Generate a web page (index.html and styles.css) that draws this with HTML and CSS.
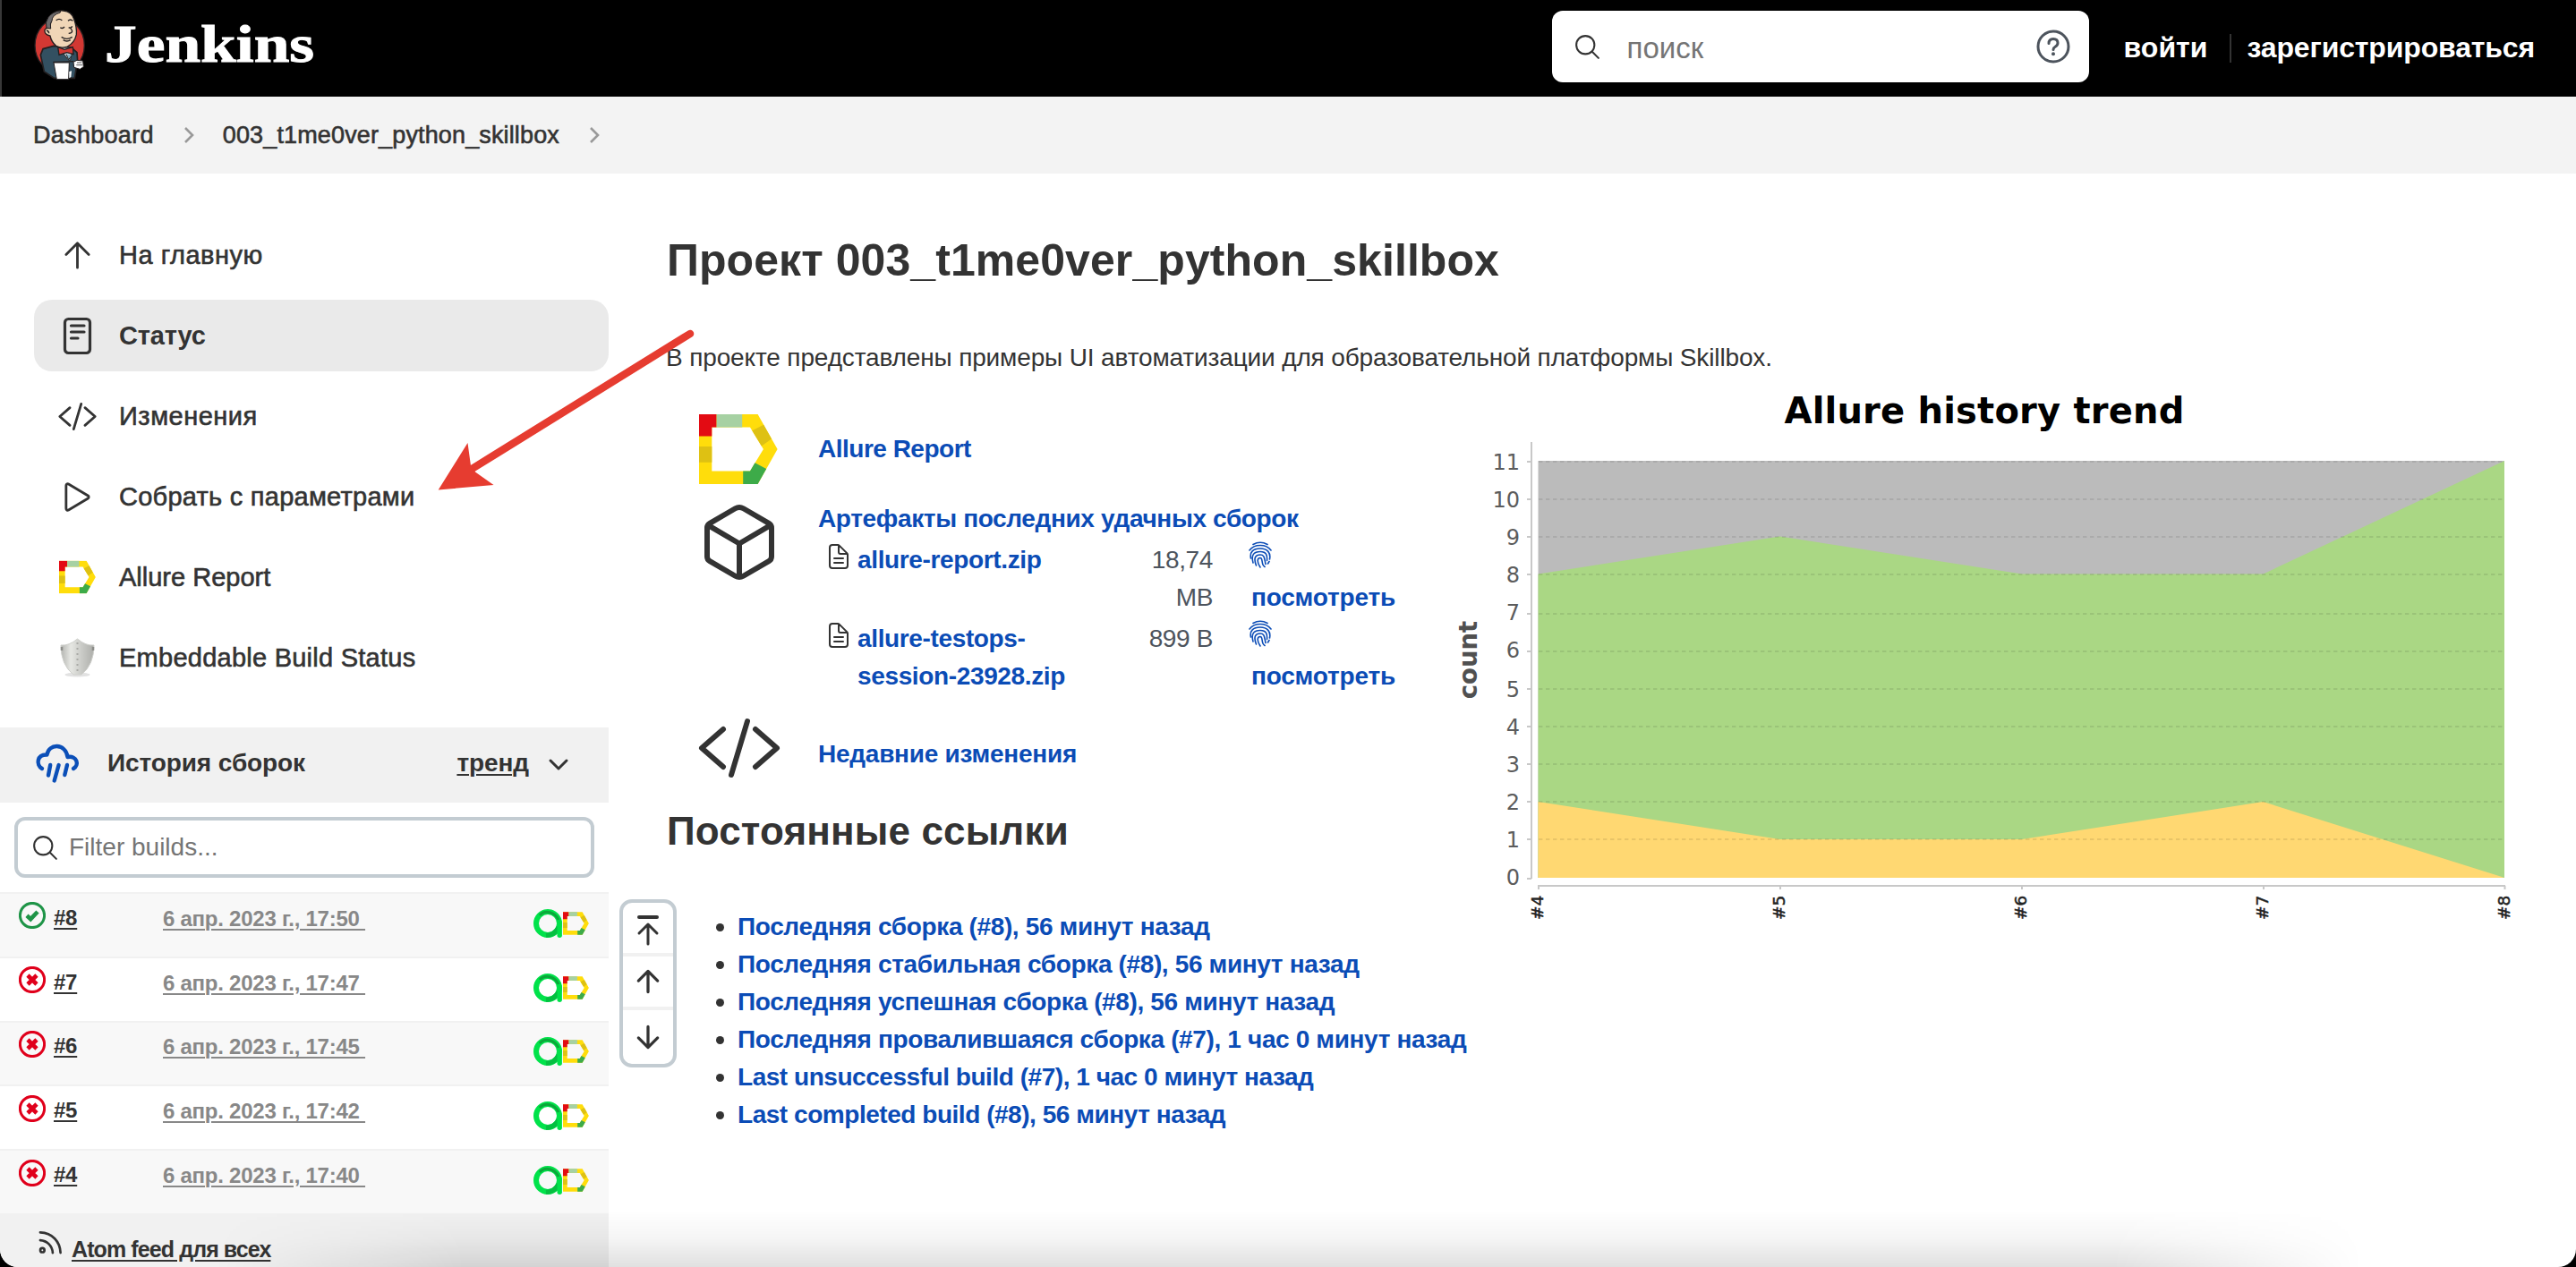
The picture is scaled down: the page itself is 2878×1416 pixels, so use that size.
FILE: index.html
```
<!DOCTYPE html>
<html lang="ru">
<head>
<meta charset="utf-8">
<title>003_t1me0ver_python_skillbox [Jenkins]</title>
<link rel="stylesheet" href="styles.css">
</head>
<body>
<svg class="sprite" aria-hidden="true">
  <symbol id="allure" viewBox="0 0 88 78">
    <path fill="#ffdd0b" d="M0 0H65.600L87.600 39 65.600 78H0zM14.300 14.500V63.400H57L71.900 39 57 14.500z" fill-rule="evenodd"/>
    <path fill="#e30b13" d="M0 0H19.600V14.500H14.300V24.400H0z"/>
    <path fill="#a6d1a3" d="M19.600 0H48.200V14.500H19.600z"/>
    <path fill="#dec113" d="M0 36H14.300V53.800H0zM72.200 11.700L81 27.500 69.800 35.500 59.300 18.300z"/>
    <path fill="#3dab49" d="M62.400 54.300L75.200 61 65.600 78H49.200V63.400H57z"/>
  </symbol>
  <symbol id="testops" viewBox="0 0 32 32">
    <circle cx="16" cy="16" r="13" fill="none" stroke="#00e24a" stroke-width="6"/>
    <path d="M7 7C13 .5 24 3 28 12" fill="none" stroke="#0aa83a" stroke-width="3"/>
    <path d="M14 29.500C21 29 26 25 28 20" fill="none" stroke="#05bf41" stroke-width="5"/>
    <path d="M29.200 15V29.300" fill="none" stroke="#00e24a" stroke-width="5.400" stroke-linecap="round"/>
  </symbol>
  <symbol id="up" viewBox="0 0 512 512"><path d="M112 244l144-144 144 144M256 120v292"/></symbol>
  <symbol id="down" viewBox="0 0 512 512"><path d="M112 268l144 144 144-144M256 392V100"/></symbol>
  <symbol id="code" viewBox="0 0 512 512"><path d="M160 368L32 256l128-112M352 368l128-112-128-112M304 96l-96 320"/></symbol>
  <symbol id="search" viewBox="0 0 512 512"><path d="M221.090 64a157.090 157.090 0 10157.090 157.090A157.100 157.100 0 00221.090 64zM338.290 338.290L448 448"/></symbol>
  <symbol id="doc" viewBox="0 0 512 512"><path d="M416 221.250V416a48 48 0 01-48 48H144a48 48 0 01-48-48V96a48 48 0 0148-48h98.750a32 32 0 0122.620 9.370l141.260 141.260a32 32 0 019.370 22.620zM256 56v120a32 32 0 0032 32h120M176 288h160M176 368h160"/></symbol>
  <symbol id="finger" viewBox="0 0 26 30"><path d="M5 3.500Q13-1 21 3.500M1 10Q5 4.500 13 4.500T25 10M2.500 19C1 12 5 8 13 8S25 13 23.500 20M5 24C2.500 15 6 11.500 13 11.500S21 16 20.500 21.500M8.500 27C5 18 8 15 13 15S17.500 19 19 25.500M13 29C9 23 9.500 18.500 13 18.500S13.500 26 18 28.500M21.500 25L23 22.500"/></symbol>
  <symbol id="fail" viewBox="0 0 30 30"><circle cx="15" cy="15" r="13.600"/><path class="mark" d="M10 10L20 20M20 10L10 20"/></symbol>
  <symbol id="ok" viewBox="0 0 30 30"><circle cx="15" cy="15" r="13.600"/><path class="mark" d="M9 15.300L13.200 19.200 21 11"/></symbol>
</svg>

<div class="page">
  <header class="header">
    <svg class="butler" viewBox="0 0 270 288">
      <ellipse cx="110" cy="140" rx="83" ry="92" fill="#d33833" stroke="#231f20" stroke-width="4"/>
      <path d="M54 152L90 142 150 148 168 164 170 190 160 250 92 250 58 228 46 172z" fill="#335061" stroke="#231f20" stroke-width="5"/>
      <path d="M106 146L152 148 146 190 138 188z" fill="#c9d6de" stroke="#231f20" stroke-width="3"/>
      <path d="M82 40Q94 22 122 24 150 26 158 52 168 80 166 104 160 132 136 144 116 152 98 142 82 128 78 108 58 104 60 88 66 78 78 82z" fill="#f0d6b7" stroke="#231f20" stroke-width="4"/>
      <path d="M112 24Q84 28 72 46 60 62 66 82L80 84Q76 66 84 58 84 38 112 30z" fill="#6d6b6d" stroke="#231f20" stroke-width="3"/>
      <path d="M98 56Q108 48 118 56M138 58Q146 50 154 58M112 80Q120 86 126 78M140 80Q148 84 152 76M146 82Q160 98 140 100M116 112Q134 124 152 112M122 122Q134 130 146 122M66 90Q74 92 74 100" fill="none" stroke="#231f20" stroke-width="4"/>
      <path d="M104 146L126 154 154 146 156 170 134 164 108 172z" fill="#d33833" stroke="#231f20" stroke-width="4"/>
      <path d="M132 170L140 188 152 172" fill="#81b0c4" stroke="#231f20" stroke-width="3"/>
      <path d="M90 198L142 198 140 254 100 254z" fill="#fff" stroke="#231f20" stroke-width="3"/>
      <path d="M142 228L150 226 148 246 142 250z" fill="#fff"/>
      <path d="M156 196L168 190 188 192 190 212 178 220 158 214z" fill="#fff" stroke="#231f20" stroke-width="3"/>
      <path d="M168 198H184M166 206H186" stroke="#555" stroke-width="3"/>
      <path d="M88 196L156 194" stroke="#231f20" stroke-width="4"/>
    </svg>
    <span class="brand">Jenkins</span>
    <div class="search">
      <svg class="line i33"><use href="#search"/></svg>
      <span class="search-hint">поиск</span>
      <svg class="help" viewBox="0 0 38 38"><circle cx="19" cy="19" r="17"/><path d="M14 15.500Q14 10.500 19 10.500T24 15Q24 17.500 21.500 19T19 22.500"/><circle class="dot" cx="19" cy="27.300" r="2"/></svg>
    </div>
    <nav class="login"><a class="signin">войти</a><a class="signup">зарегистрироваться</a></nav>
  </header>

  <div class="crumbs">
    <span>Dashboard</span>
    <svg class="sep" viewBox="0 0 12 20"><path d="M2 2L10 10 2 18"/></svg>
    <span class="job">003_t1me0ver_python_skillbox</span>
    <svg class="sep" viewBox="0 0 12 20"><path d="M2 2L10 10 2 18"/></svg>
  </div>

  <div class="body">
    <aside class="side">
      <nav class="tasks">
        <a class="task loose"><svg class="line i45"><use href="#up"/></svg>На главную</a>
        <a class="task active"><svg class="line i45" viewBox="0 0 45 45"><g stroke-width="3.200"><rect x="8.500" y="3.500" width="28" height="38" rx="4"/><path d="M15.500 11H30M15.500 18H30M15.500 25H23"/></g></svg>Статус</a>
        <a class="task loose"><svg class="line i45"><use href="#code"/></svg>Изменения</a>
        <a class="task"><svg class="line i45" viewBox="0 0 512 512"><path d="M112 111v290c0 17.440 17 28.520 31 20.160l247.900-148.370c12.120-7.250 12.120-26.330 0-33.580L143 90.840c-14-8.360-31 2.720-31 20.160z"/></svg>Собрать с параметрами</a>
        <a class="task tight"><svg class="i45" viewBox="0 0 45 45"><use href="#allure" x="2" y="3.500" width="41" height="37"/></svg>Allure Report</a>
        <a class="task"><svg class="i45" viewBox="0 0 45 45">
          <defs><linearGradient id="steel"><stop offset="0" stop-color="#b3b4b0"/><stop offset=".3" stop-color="#e6e7e3"/><stop offset=".55" stop-color="#d0d1cd"/><stop offset="1" stop-color="#adaeaa"/></linearGradient></defs>
          <ellipse cx="22.500" cy="41" rx="14" ry="2.500" fill="#e2e2e2"/>
          <path d="M22.500 1Q32 9 41 8 41 30 27 41H18Q4 30 4 8 13 9 22.500 1z" fill="url(#steel)" stroke="#cfd0cc"/>
          <path d="M22.500 5V37" stroke="#a9aaa6" stroke-width="2" stroke-dasharray="2 4"/>
          <path d="M5 10V14M40 10V14" stroke="#8c8d89" stroke-width="2.500"/></svg>Embeddable Build Status</a>
      </nav>

      <section class="history">
        <div class="history-head">
          <svg class="cloud" viewBox="0 0 48 44"><path d="M7 28C0 24 1 12 12.500 12.500 14 0 33 -1 35.500 15 46 13 49 24 42 28M16.200 24L14 35.500M25.600 24L20.700 41.500M35 24L32.300 35"/></svg>
          <b>История сборок</b>
          <a class="trend">тренд</a>
          <svg class="chev" viewBox="0 0 24 16"><path d="M3 3L12 12 21 3"/></svg>
        </div>
        <div class="filter"><svg class="line i33"><use href="#search"/></svg><span>Filter builds...</span></div>
        <div class="builds">
          <div class="build"><svg class="ball ok"><use href="#ok"/></svg><a class="num">#8</a><a class="date">6 апр. 2023 г., 17:50&nbsp;</a><span class="badges"><svg class="a"><use href="#testops"/></svg><svg class="d"><use href="#allure"/></svg></span></div>
          <div class="build"><svg class="ball"><use href="#fail"/></svg><a class="num">#7</a><a class="date">6 апр. 2023 г., 17:47&nbsp;</a><span class="badges"><svg class="a"><use href="#testops"/></svg><svg class="d"><use href="#allure"/></svg></span></div>
          <div class="build"><svg class="ball"><use href="#fail"/></svg><a class="num">#6</a><a class="date">6 апр. 2023 г., 17:45&nbsp;</a><span class="badges"><svg class="a"><use href="#testops"/></svg><svg class="d"><use href="#allure"/></svg></span></div>
          <div class="build"><svg class="ball"><use href="#fail"/></svg><a class="num">#5</a><a class="date">6 апр. 2023 г., 17:42&nbsp;</a><span class="badges"><svg class="a"><use href="#testops"/></svg><svg class="d"><use href="#allure"/></svg></span></div>
          <div class="build"><svg class="ball"><use href="#fail"/></svg><a class="num">#4</a><a class="date">6 апр. 2023 г., 17:40&nbsp;</a><span class="badges"><svg class="a"><use href="#testops"/></svg><svg class="d"><use href="#allure"/></svg></span></div>
        </div>
        <div class="feed">
          <svg class="rss" viewBox="0 0 28 28"><path d="M2 2.500C16 3 25 13 25.500 26M2 11.500C10 12 16 18 16.500 26"/><circle cx="4.500" cy="23" r="2.400"/></svg>
          <a>Atom feed для всех</a>
        </div>
      </section>
    </aside>

    <main class="main">
      <h1>Проект 003_t1me0ver_python_skillbox</h1>
      <p class="about">В проекте представлены примеры UI автоматизации для образовательной платформы Skillbox.</p>
      <div class="columns">
        <div class="info">
          <div class="entry report"><svg class="big-allure"><use href="#allure"/></svg><a class="wide">Allure Report</a></div>
          <div class="entry artifacts">
            <svg class="line i96 cube" viewBox="0 0 512 512"><path d="M448 341.370V170.610A32 32 0 00432.110 143l-152-88.460a47.940 47.940 0 00-48.240 0L79.890 143A32 32 0 0064 170.610v170.760A32 32 0 0079.890 369l152 88.460a48 48 0 0048.240 0l152-88.460A32 32 0 00448 341.370zM69 153.990l187 110 187-110M256 463.990v-200"/></svg>
            <div class="artifact-list">
              <a>Артефакты последних удачных сборок</a>
              <div class="files">
                <svg class="line doc"><use href="#doc"/></svg><a class="name">allure-report.zip</a><span class="size">18,74<br>MB</span><span class="view"><svg class="finger"><use href="#finger"/></svg><a>посмотреть</a></span>
                <svg class="line doc"><use href="#doc"/></svg><a class="name">allure-testops-<br>session-23928.zip</a><span class="size">899 B</span><span class="view"><svg class="finger"><use href="#finger"/></svg><a>посмотреть</a></span>
              </div>
            </div>
          </div>
          <div class="entry changes"><svg class="line i96"><use href="#code"/></svg><a>Недавние изменения</a></div>
          <h2>Постоянные ссылки</h2>
          <ul class="links">
            <li><a>Последняя сборка (#8), 56 минут назад</a></li>
            <li><a>Последняя стабильная сборка (#8), 56 минут назад</a></li>
            <li><a>Последняя успешная сборка (#8), 56 минут назад</a></li>
            <li><a>Последняя провалившаяся сборка (#7), 1 час 0 минут назад</a></li>
            <li><a class="latin">Last unsuccessful build (#7), 1 час 0 минут назад</a></li>
            <li><a class="latin">Last completed build (#8), 56 минут назад</a></li>
          </ul>
        </div>
        <svg class="chart" viewBox="1620 420 1258 620">
          <text class="chart-title" x="2217" y="472">Allure history trend</text>
          <path fill="#bbb" d="M1718.500 514H2798V980H1718.500z"/>
          <path fill="#aad784" d="M1718.500 640.500L1988.500 598.500 2259 640.500H2528.500L2798 514V980H1718.500z"/>
          <path fill="#ffd872" d="M1718.500 895L1988.500 937H2259L2528.500 895 2798 980H1718.500z"/>
          <path class="grid" d="M1719 515H2798M1719 557H2798M1719 599H2798M1719 641H2798M1719 685H2798M1719 727H2798M1719 769H2798M1719 811H2798M1719 853H2798M1719 895H2798M1719 937H2798"/>
          <path class="axis" d="M1711 493V981M1706 515H1711M1706 557H1711M1706 599H1711M1706 641H1711M1706 685H1711M1706 727H1711M1706 769H1711M1706 811H1711M1706 853H1711M1706 895H1711M1706 937H1711M1706 981H1711M1718 989H2799M1719 989V993M1989 989V993M2259 989V993M2529 989V993M2798.500 989V993"/>
          <g class="y-labels">
            <text x="1698" y="524">11</text><text x="1698" y="566">10</text><text x="1698" y="608">9</text><text x="1698" y="650">8</text><text x="1698" y="692">7</text><text x="1698" y="734">6</text><text x="1698" y="778">5</text><text x="1698" y="820">4</text><text x="1698" y="862">3</text><text x="1698" y="904">2</text><text x="1698" y="946">1</text><text x="1698" y="988">0</text>
          </g>
          <text class="y-title" transform="translate(1649.500 736.500) rotate(-90)">count</text>
          <g class="x-labels">
            <text transform="translate(1724 1027) rotate(-90)">#4</text><text transform="translate(1994 1027) rotate(-90)">#5</text><text transform="translate(2264 1027) rotate(-90)">#6</text><text transform="translate(2533.500 1027) rotate(-90)">#7</text><text transform="translate(2803.500 1027) rotate(-90)">#8</text>
          </g>
        </svg>
      </div>
    </main>
  </div>

  <div class="pager">
    <span><svg class="line i40" viewBox="0 0 40 40"><path stroke-width="4" d="M10 6H30"/><path stroke-width="3" d="M10 24L20 14 30 24M20 15V36"/></svg></span>
    <span><svg class="line i38"><use href="#up"/></svg></span>
    <span><svg class="line i38"><use href="#down"/></svg></span>
  </div>
  <svg class="pointer" viewBox="480 360 310 200"><path d="M771 373L524 526" fill="none" stroke="#e63c30" stroke-width="8.500" stroke-linecap="round"/><path d="M489.700 547.500L522.500 495 526 520.500 531 527.500 551.500 542z" fill="#e63c30"/></svg>
  <div class="shade"></div>
</div>
</body>
</html>
```
FILE: styles.css
```
* { box-sizing: border-box; }
body {
  margin: 0;
  background: #000;
  color: #333;
  font: 28px/42px "Liberation Sans", Arial, sans-serif;
}
svg { display: block; flex: none; overflow: visible; }
.sprite { position: absolute; width: 0; height: 0; }
.page {
  position: relative;
  display: flex;
  flex-direction: column;
  height: 1416px;
  overflow: hidden;
  background: #fff;
  border-radius: 0 0 20px 20px;
}

.line { fill: none; stroke: #333; stroke-width: 32; stroke-linecap: round; stroke-linejoin: round; }
.i33 { width: 33px; height: 33px; }
.i38 { width: 38px; height: 38px; stroke-width: 44; }
.i40 { width: 40px; height: 40px; }
.i45 { width: 45px; height: 45px; }
.i96 { width: 96px; height: 96px; }

/* top bar */
.header {
  flex: none;
  display: flex;
  align-items: center;
  height: 108px;
  padding: 0 46px 4px 28px;
  background: #000;
  border-left: 2px solid #383838;
  color: #fff;
  font-size: 32px;
}
.butler { width: 90px; height: 96px; }
.brand {
  width: 236px;
  margin: -6px 0 0 -3px;
  font: bold 60px/70px "Liberation Serif", "Times New Roman", serif;
  transform: scaleX(1.19);
  transform-origin: left;
  -webkit-text-stroke: 1px #fff;
}
.search {
  display: flex;
  align-items: center;
  width: 600px;
  height: 80px;
  margin-left: auto;
  padding: 0 21px 0 23px;
  background: #fff;
  border-radius: 12px;
  color: #757575;
  font-size: 33px;
}
.search-hint { margin: 4px auto 0 28px; }
.help { width: 38px; height: 38px; fill: none; stroke: #4d545d; stroke-width: 3; stroke-linecap: round; }
.help .dot { fill: #4d545d; stroke: none; }
.login { display: flex; align-items: center; padding-top: 1px; font-weight: bold; }
.signin { padding: 0 25px 0 39px; }
.signup { letter-spacing: -.15px; }
.signup::before {
  content: "";
  display: inline-block;
  width: 2px;
  height: 32px;
  margin: 0 17px -6px 0;
  background: #333;
}

/* breadcrumbs */
.crumbs {
  flex: none;
  display: flex;
  align-items: center;
  height: 86px;
  padding-left: 37px;
  background: #f3f3f3;
  font-size: 27px;
  letter-spacing: .3px;
  -webkit-text-stroke: .6px #333;
}
.job { letter-spacing: .14px; }
.sep { width: 12px; height: 20px; margin: 0 32px 0 33px; fill: none; stroke: #999; stroke-width: 2.6; }

.body { display: flex; }

/* side panel */
.side { flex: none; width: 680px; padding-top: 51px; }
.tasks { display: flex; flex-direction: column; gap: 10px; margin-left: 38px; }
.task {
  display: flex;
  align-items: center;
  gap: 24px;
  height: 80px;
  padding-left: 26px;
  border-radius: 20px;
  font-size: 29px;
  letter-spacing: .25px;
  -webkit-text-stroke: .6px #333;
}
.task.loose { letter-spacing: .5px; }
.task.tight { letter-spacing: 0; }
.task.active { background: #eaeaea; font-weight: bold; letter-spacing: -.15px; -webkit-text-stroke: 0; }

.history { margin-top: 38px; }
.history-head {
  display: flex;
  align-items: center;
  height: 84px;
  padding: 0 44px 4px 40px;
  background: #f1f1f1;
  letter-spacing: -.1px;
}
.cloud { width: 48px; height: 44px; margin-right: 32px; fill: none; stroke: #0b4fb8; stroke-width: 4.400; stroke-linecap: round; stroke-linejoin: round; }
.trend { margin-left: auto; font-weight: bold; text-decoration: underline; text-decoration-thickness: 2px; text-underline-offset: 3px; }
.chev { width: 24px; height: 16px; margin: 4px 0 0 21px; fill: none; stroke: #333; stroke-width: 3; stroke-linecap: round; stroke-linejoin: round; }
.filter {
  display: flex;
  align-items: center;
  gap: 10px;
  height: 68px;
  margin: 16px;
  padding-left: 14px;
  border: 4px solid #c3ccd2;
  border-radius: 12px;
  color: #757575;
}
.build {
  display: flex;
  align-items: center;
  height: 71.8px;
  padding: 0 22px 16px 21px;
  border-top: 2px solid #f1f1f1;
  font-size: 24px;
  font-weight: bold;
  letter-spacing: -.25px;
}
.build:nth-child(odd) { background: #f8f8f8; }
.ball { width: 30px; height: 30px; margin-top: -5px; fill: none; stroke: #e0001b; stroke-width: 3; }
.ball.ok { stroke: #1e9447; }
.mark { stroke-width: 4.600; }
.num, .date { text-decoration: underline; text-decoration-thickness: 2px; text-underline-offset: 3px; }
.num { width: 26px; margin-left: 9px; }
.date { margin: 2px 0 0 96px; color: #888; }
.badges { display: flex; align-items: center; gap: 1px; margin: 12px 0 0 auto; }
.a { width: 32px; height: 32px; }
.d { width: 29px; height: 26px; }
.feed {
  display: flex;
  align-items: center;
  gap: 10px;
  height: 80px;
  padding-left: 43px;
  background: #f1f1f1;
  font-size: 25px;
  font-weight: bold;
  letter-spacing: -.9px;
}
.feed a { text-decoration: underline; text-decoration-thickness: 2px; text-underline-offset: 3px; }
.rss { width: 27px; height: 27px; margin-top: -14px; fill: none; stroke: #333; stroke-width: 2.800; stroke-linecap: round; }

/* project page */
.main { flex: 1; padding: 67px 0 0 65px; min-width: 0; }
.main a { color: #0b4cb6; font-weight: bold; letter-spacing: -.36px; white-space: nowrap; }
h1 { margin: 0; font-size: 50px; line-height: 60px; letter-spacing: .07px; }
.about { margin: 58px 0 0 -1px; letter-spacing: -.14px; }
.columns { display: flex; }
.info { flex: none; width: 875px; }
.entry { display: flex; padding-left: 36px; }
.report { align-items: center; gap: 45px; height: 80px; margin-top: 41px; }
.main a.wide { letter-spacing: -.5px; }
.big-allure { width: 88px; height: 78px; }
.artifacts { gap: 40px; margin-top: 16px; }
.artifacts .cube, .changes .line { margin-left: -3px; }
.artifact-list { padding-top: 1px; }
.files {
  display: grid;
  grid-template-columns: 32px 325px 72px 1fr;
  row-gap: 4px;
  margin-top: 4px;
  padding-left: 12px;
}
.doc { width: 32px; height: 32px; margin: 1px 0 0 -5px; }
.size { color: #4d545d; text-align: right; letter-spacing: -.37px; }
.view { padding-left: 40px; }
.finger { width: 26px; height: 30px; margin: 0 0 12px; fill: none; stroke: #0b4cb6; stroke-width: 1.600; stroke-linecap: round; }
.view a { display: block; margin-left: 3px; }
.main .view a { letter-spacing: -.2px; }
.changes { align-items: center; gap: 40px; height: 80px; margin-top: 19px; }
.changes a { margin-top: 14px; }
.main .changes a { letter-spacing: -.25px; }
h2 { margin: 27px 0 0; font-size: 44px; line-height: 52px; letter-spacing: .15px; }
.links { margin: 60px 0 0; padding: 0 0 0 79px; list-style: none; }
.links li { display: flex; align-items: center; }
.links li::before { content: ""; flex: none; width: 9px; height: 9px; margin: 1px 15px 0 -24px; border-radius: 50%; background: #333; }
.main .latin { letter-spacing: -.46px; }

/* trend chart */
.chart { width: 1258px; height: 620px; font-family: "DejaVu Sans", sans-serif; }
.chart-title { font-size: 40px; font-weight: bold; text-anchor: middle; letter-spacing: .2px; }
.grid { fill: none; stroke: rgba(0, 0, 0, .09); stroke-width: 2; stroke-dasharray: 4.400 3.600; }
.axis { fill: none; stroke: #c8c8c8; stroke-width: 2; }
.y-labels { font-size: 24px; fill: #5c5c5c; text-anchor: end; }
.y-title { font-size: 27.500px; font-weight: bold; fill: #505050; text-anchor: middle; }
.x-labels { font-size: 18.500px; fill: #222; stroke: #222; stroke-width: .5; }

/* overlays */
.pager {
  position: absolute;
  left: 692px;
  top: 1005px;
  width: 64px;
  height: 188px;
  background: #fff;
  border: 4px solid #c3ccd2;
  border-radius: 14px;
}
.pager span { display: flex; align-items: center; justify-content: center; height: 60px; border-bottom: 4px solid #f1f1f1; }
.pager span:last-child { border: 0; }
.pager span:first-child .line { margin-top: 4px; }
.pointer { position: absolute; left: 480px; top: 360px; width: 310px; height: 200px; }
.shade {
  position: absolute;
  left: 0;
  right: 0;
  bottom: 0;
  height: 64px;
  background: linear-gradient(rgba(0, 0, 0, 0), rgba(0, 0, 0, .04) 50%, rgba(0, 0, 0, .12));
  -webkit-mask-image: linear-gradient(90deg, transparent 240px, #000 520px, #000 2360px, transparent 2640px);
  mask-image: linear-gradient(90deg, transparent 240px, #000 520px, #000 2360px, transparent 2640px);
}
```
